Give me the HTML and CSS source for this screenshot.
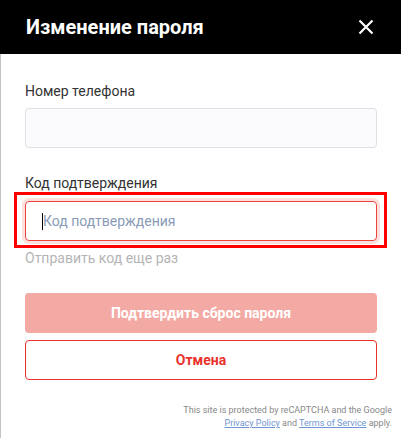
FILE: index.html
```html
<!DOCTYPE html>
<html lang="ru">
<head>
  <meta charset="UTF-8" />
  <meta name="viewport" content="width=device-width, initial-scale=1" />
  <title>Изменение пароля</title>
  <link rel="stylesheet" href="styles.css">
</head>
<body>
  <div class="modal">
    <div class="modal-header">
      <h2>Изменение пароля</h2>
      <button class="close-btn" aria-label="Закрыть">
        <svg width="16" height="16" viewBox="0 0 16 16">
          <path d="M1.5 1.5 L14.5 14.5 M14.5 1.5 L1.5 14.5" stroke="#fff" stroke-width="2.2" fill="none" />
        </svg>
      </button>
    </div>

    <div class="modal-body">
      <label class="field-label" for="phone">Номер телефона</label>
      <input class="field" type="tel" id="phone" />

      <label class="field-label second" for="code">Код подтверждения</label>
      <div class="highlight">
        <div class="fake-input">
          <span class="caret"></span>
          <span class="placeholder">Код подтверждения</span>
        </div>
      </div>
      <div class="resend">Отправить код еще раз</div>

      <button class="btn btn-primary" disabled>Подтвердить сброс пароля</button>
      <button class="btn btn-outline">Отмена</button>

      <p class="recaptcha">
        This site is protected by reCAPTCHA and the Google<br />
        <a href="#">Privacy Policy</a> and <a href="#">Terms of Service</a> apply.
      </p>
    </div>
  </div>
</body>
</html>
```

FILE: styles.css
```css
body {
  margin: 0;
  font-family: Roboto, 'Noto Sans', sans-serif;
  background-color: #fff;
  color: #333;
}
.modal {
  width: 401px;
  height: 438px;
  overflow: hidden;
}
.modal-header {
  height: 54px;
  background-color: #000;
  display: flex;
  align-items: center;
  justify-content: space-between;
  padding: 0 27px 0 26px;
}
.modal-header h2 {
  margin: 0;
  color: #fff;
  font-size: 20px;
  font-weight: 700;
}
.close-btn {
  background: none;
  border: none;
  padding: 0;
  display: flex;
  cursor: pointer;
}
.modal-body {
  border-left: 1px solid #c4c4c4;
  padding: 28px 24px 0 24px;
  display: flex;
  flex-direction: column;
  min-height: 384px;
}
.field-label {
  font-size: 14px;
  line-height: 18px;
  color: #333;
  margin-bottom: 8px;
}
.field-label.second {
  margin-top: 26px;
  margin-bottom: 9px;
}
.field {
  height: 40px;
  box-sizing: border-box;
  border: 1px solid #dfe0e5;
  border-radius: 4px;
  background-color: #fbfbfe;
  font-size: 14px;
  padding: 0 15px;
}
.highlight {
  position: relative;
}
.highlight::after {
  content: '';
  position: absolute;
  top: -9px;
  left: -11px;
  right: -10px;
  bottom: -7px;
  border: 3px solid #ff0000;
  pointer-events: none;
}
.fake-input {
  height: 40px;
  box-sizing: border-box;
  border: 1px solid #e8453c;
  border-radius: 4px;
  box-shadow: 0 0 0 3px #fde0dd;
  display: flex;
  align-items: center;
  padding-left: 16px;
}
.caret {
  width: 1px;
  height: 17px;
  background-color: #000;
}
.placeholder {
  font-size: 14px;
  color: #8a9bb8;
}
.resend {
  margin-top: 8px;
  font-size: 14px;
  line-height: 18px;
  color: #b5b5b5;
}
.btn {
  height: 40px;
  border-radius: 4px;
  font-family: inherit;
  font-size: 14px;
  font-weight: 700;
  cursor: pointer;
}
.btn-primary {
  margin-top: 26px;
  background-color: #f4aaa4;
  border: none;
  color: #fff;
}
.btn-outline {
  margin-top: 7px;
  background-color: #fff;
  border: 1px solid #e8322b;
  color: #e8322b;
}
.recaptcha {
  margin: 24px -15px 0 0;
  text-align: right;
  font-size: 9px;
  line-height: 13px;
  color: #888;
}
.recaptcha a {
  color: #6f95d3;
}
```
